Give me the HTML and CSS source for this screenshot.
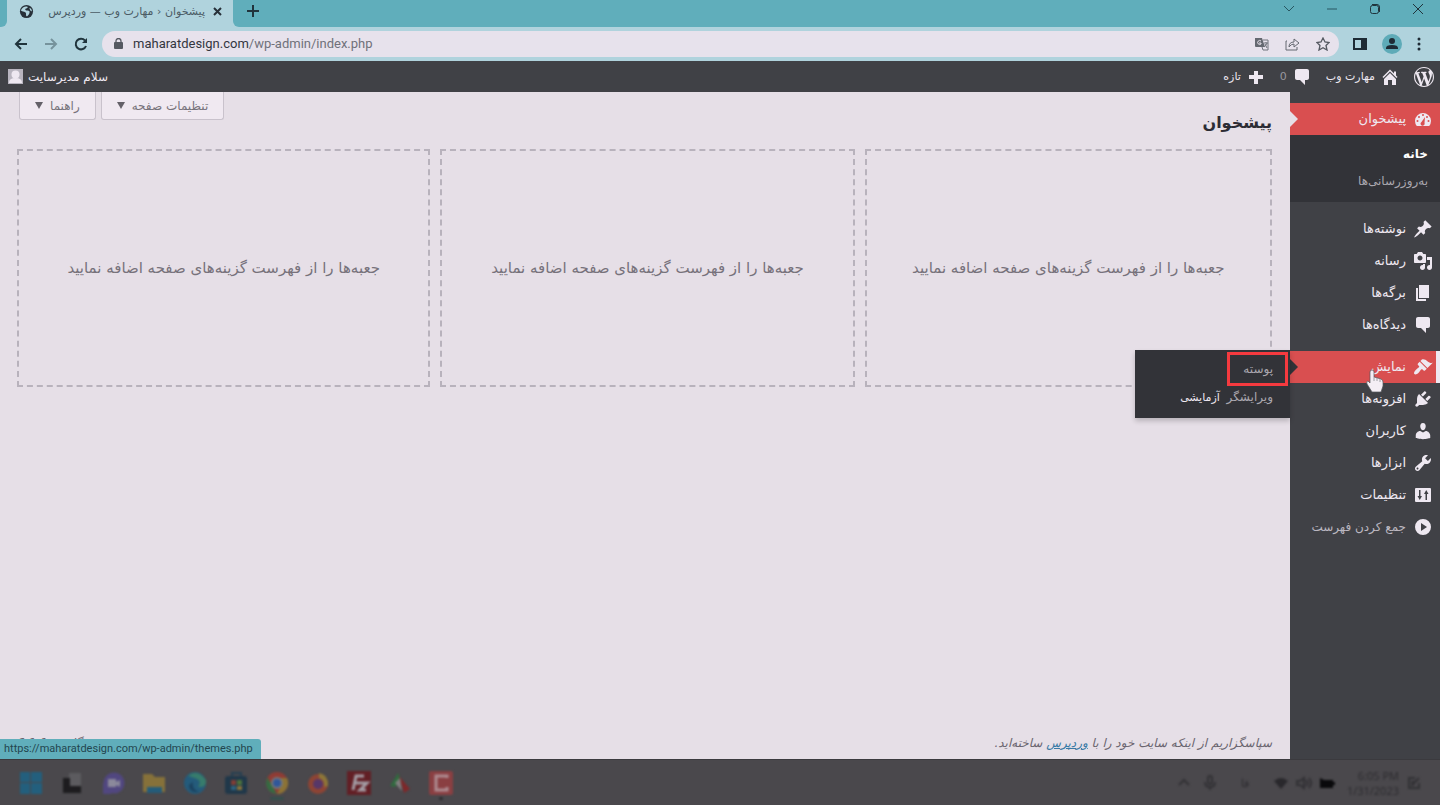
FILE: index.html
```html
<!DOCTYPE html>
<html lang="fa">
<head>
<meta charset="utf-8">
<title>پیشخوان ‹ مهارت وب — وردپرس</title>
<link rel="stylesheet" href="styles.css">
</head>
<body>
<header class="tabstrip">
  <div class="tab">
    <svg class="tab-globe" viewBox="0 0 16 16"><circle cx="8" cy="8" r="7" fill="#273039"/><path d="M3 5c2-2 4-3 6-2 1 1-1 2-2 2-1 1 0 2 2 2 2 0 3 1 2 3s-2 3-3 3c-1-1 0-3-1-4-2-1-4-1-5-2zM11 4l2 1 1 3-2-1z" fill="#b0d3dd"/></svg>
    <span class="tab-title" dir="rtl">پیشخوان ‹ مهارت وب — وردپرس</span>
    <button class="plain" aria-label="Close tab"><svg width="9" height="9" viewBox="0 0 9 9"><path d="M1 1l7 7M8 1L1 8" stroke="#273039" stroke-width="2"/></svg></button>
  </div>
  <div class="strip-rest">
    <button class="plain new-tab" aria-label="New tab"><svg width="12" height="12" viewBox="0 0 12 12"><path d="M6 0v12M0 6h12" stroke="#20343c" stroke-width="2"/></svg></button>
    <div class="window-buttons">
      <button class="plain" aria-label="Search tabs"><svg width="12" height="12" viewBox="0 0 12 12"><path d="M1 3l5 5 5-5"/></svg></button>
      <button class="plain" aria-label="Minimize"><svg width="12" height="12" viewBox="0 0 12 12"><path d="M1 6h10"/></svg></button>
      <button class="plain dark" aria-label="Restore"><svg width="12" height="12" viewBox="0 0 12 12"><rect x="1.500" y="2.500" width="8" height="8" rx="2"/><path d="M3 1.500h5q2.500 0 2.500 2.500v5"/></svg></button>
      <button class="plain dark" aria-label="Close"><svg width="12" height="12" viewBox="0 0 12 12"><path d="M1 1l10 10M11 1L1 11"/></svg></button>
    </div>
  </div>
</header>

<nav class="toolbar" aria-label="Browser">
  <div class="history">
    <button class="plain" aria-label="Back"><svg width="14" height="14" viewBox="0 0 14 14"><path d="M13 7H2M7 2L2 7l5 5"/></svg></button>
    <button class="plain faded" aria-label="Forward"><svg width="14" height="14" viewBox="0 0 14 14"><path d="M1 7h11M7 2l5 5-5 5"/></svg></button>
    <button class="plain" aria-label="Reload"><svg width="14" height="14" viewBox="0 0 14 14"><path d="M12 9A5.300 5.300 0 1 1 11 3.500"/><path d="M13 1v5H8z" fill="#20343c" stroke="none"/></svg></button>
  </div>
  <div class="address">
    <svg width="9" height="12" viewBox="0 0 9 12"><rect y="4" width="9" height="7" rx="1" fill="#555961"/><path d="M2 5V3a2.500 2.500 0 0 1 5 0v2" fill="none" stroke="#555961" stroke-width="1.300"/></svg>
    <a class="url" href="#">maharatdesign.com<span>/wp-admin/index.php</span></a>
    <div class="address-actions">
      <button class="plain" aria-label="Translate"><svg width="14" height="14" viewBox="0 0 14 14"><path d="M0 1h7l3 9H1q-1 0-1-1z" fill="#656971"/><path d="M6 4a2 2 0 1 0 0 3V6H4" fill="none" stroke="#e9e4ed"/><path d="M8 3h5v10H8l-1-3M9 6h4M11 5v1M12 6q-1 3-3 4M10 7l2 4" fill="none" stroke="#70747c"/></svg></button>
      <button class="plain" aria-label="Share"><svg width="15" height="14" viewBox="0 0 15 14" fill="none" stroke="#656971"><path d="M2 4H1v9h11v-3M4 10q0-5 5-5V2l5 4-5 4V7Q6 7 4 10z"/></svg></button>
      <button class="plain" aria-label="Bookmark"><svg width="14" height="14" viewBox="0 0 14 14" fill="none" stroke="#555961" stroke-width="1.300"><path d="M7 1l2 4 4 .5-3 3 1 4.500-4-2.300L3 13l1-4.500-3-3L5 5z"/></svg></button>
    </div>
  </div>
  <div class="browser-actions">
    <button class="plain" aria-label="Side panel"><svg width="14" height="14" viewBox="0 0 14 14"><path d="M1 2h12v10H1z" fill="none" stroke="#1e2b35" stroke-width="2"/><path d="M8 2h5v10H8z" fill="#1e2b35"/></svg></button>
    <button class="plain" aria-label="Profile"><svg width="20" height="20" viewBox="0 0 20 20"><circle cx="10" cy="10" r="10" fill="#5eabb8"/><circle cx="10" cy="7" r="3" fill="#1e2b35"/><path d="M4 15v-1q0-3 6-3t6 3v1z" fill="#1e2b35"/></svg></button>
    <button class="plain" aria-label="Menu"><svg width="4" height="14" viewBox="0 0 4 14" fill="#1e2b35"><circle cx="2" cy="2" r="1.500"/><circle cx="2" cy="7" r="1.500"/><circle cx="2" cy="12" r="1.500"/></svg></button>
  </div>
</nav>

<div class="adminbar" dir="rtl">
  <a href="#" aria-label="WordPress"><svg class="icon" viewBox="0 0 20 20"><path d="M20 10c0-5.510-4.490-10-10-10C4.480 0 0 4.490 0 10c0 5.520 4.480 10 10 10 5.510 0 10-4.480 10-10zM7.780 15.370L4.370 6.220c.55-.02 1.170-.08 1.170-.08.5-.06.44-1.130-.06-1.110 0 0-1.450.11-2.370.11-.18 0-.37 0-.58-.01C4.120 2.690 6.870 1.110 10 1.110c2.330 0 4.450.87 6.050 2.340-.68-.11-1.650.39-1.650 1.580 0 .74.45 1.360.9 2.100.35.61.55 1.360.55 2.460 0 1.490-1.400 5-1.400 5l-3.030-8.370c.54-.02.82-.17.82-.17.5-.05.44-1.250-.06-1.220 0 0-1.440.12-2.380.12-.87 0-2.330-.12-2.330-.12-.5-.03-.56 1.200-.06 1.220l.92.08 1.260 3.410zM17.410 10c.24-.64.74-1.870.43-4.250.7 1.290 1.050 2.710 1.050 4.250 0 3.290-1.730 6.240-4.400 7.780.97-2.590 1.940-5.200 2.920-7.780zM6.100 18.090C3.120 16.650 1.110 13.530 1.110 10c0-1.300.23-2.480.72-3.590C3.250 10.300 4.670 14.200 6.100 18.090zm4.030-6.630l2.580 6.980c-.86.29-1.760.45-2.710.45-.79 0-1.570-.11-2.290-.33.81-2.380 1.620-4.740 2.420-7.100z"/></svg></a>
  <a href="#"><svg class="icon" viewBox="0 0 20 20"><path d="M16 8.500l1.530 1.530-1.060 1.060L10 4.600l-6.470 6.490-1.060-1.060L10 2.500l4 4v-2h2v4zm-6-2.460l6 5.990V18h-4v-5H8v5H4v-5.970z"/></svg>مهارت وب</a>
  <a href="#" class="count"><svg class="icon" viewBox="0 0 20 20"><path d="M15 2H5c-1.100 0-2 .9-2 2v7c0 1.100.9 2 2 2h3l5 5v-5h2c1.100 0 2-.9 2-2V4c0-1.100-.9-2-2-2z"/></svg>0</a>
  <a href="#"><svg class="icon" viewBox="0 0 20 20"><path d="M8 4h4v4h5v4h-5v5H8v-5H3V8h5z"/></svg>تازه</a>
  <a href="#" class="account">سلام مدیرسایت<svg width="15" height="15" viewBox="0 0 15 15"><path d="M0 0h15v15H0z" fill="#b8b4bf"/><circle cx="7.500" cy="5.500" r="4" fill="#eee8f1"/><path d="M1 14q0-5 6.500-5t6.500 5z" fill="#eee8f1"/></svg></a>
</div>

<div class="workspace" dir="rtl">
  <aside class="sidebar">
    <ul class="menu">
      <li class="current"><a href="#"><svg class="icon" viewBox="0 0 20 20"><path fill-rule="evenodd" d="M3.760 17h12.480A8 8 0 1 0 3.760 17zM10 5a1 1 0 1 1 0 2 1 1 0 0 1 0-2zM6 7a1 1 0 1 1 0 2 1 1 0 0 1 0-2zm8 0a1 1 0 1 1 0 2 1 1 0 0 1 0-2zM4.500 11a1 1 0 1 1 0 2 1 1 0 0 1 0-2zm11 0a1 1 0 1 1 0 2 1 1 0 0 1 0-2zM12 8l-.5 6a2 2 0 1 1-3-1z"/></svg>پیشخوان</a>
        <ul class="submenu">
          <li><a href="#" class="selected">خانه</a></li>
          <li><a href="#">به‌روزرسانی‌ها</a></li>
        </ul>
      </li>
      <li><a href="#"><svg class="icon" viewBox="0 0 20 20"><path d="M10.440 3.020l1.820-1.820 6.360 6.350-1.830 1.820c-1.050-.68-2.480-.57-3.410.36l-.75.75c-.92.93-1.040 2.350-.35 3.410l-1.830 1.820-2.410-2.410-2.800 2.790c-.42.42-3.380 2.710-3.800 2.290s1.860-3.390 2.280-3.810l2.790-2.790L4.100 9.360l1.830-1.820c1.050.69 2.480.57 3.400-.36l.75-.75c.93-.92 1.050-2.350.36-3.410z"/></svg>نوشته‌ها</a></li>
      <li><a href="#"><svg class="icon" viewBox="0 0 20 20"><path d="M13 11V4c0-.55-.45-1-1-1h-1.670L9 1H5L3.670 3H2c-.55 0-1 .45-1 1v7c0 .55.45 1 1 1h10c.55 0 1-.45 1-1zM7 4.500c1.380 0 2.500 1.120 2.500 2.500S8.380 9.500 7 9.500 4.500 8.380 4.500 7 5.620 4.500 7 4.500zM14 6h5v10.500c0 1.380-1.120 2.500-2.500 2.500S14 17.880 14 16.500s1.120-2.500 2.500-2.500c.17 0 .34.02.5.05V9h-3V6zm-4 8.050V13h2v3.500c0 1.380-1.120 2.500-2.500 2.500S7 17.880 7 16.500 8.120 14 9.500 14c.17 0 .34.02.5.05z"/></svg>رسانه</a></li>
      <li><a href="#"><svg class="icon" viewBox="0 0 20 20"><path d="M6 15V2h10v13H6zm-1 1h8v2H3V5h2v11z"/></svg>برگه‌ها</a></li>
      <li><a href="#"><svg class="icon" viewBox="0 0 20 20"><path d="M15 2H5c-1.100 0-2 .9-2 2v7c0 1.100.9 2 2 2h3l5 5v-5h2c1.100 0 2-.9 2-2V4c0-1.100-.9-2-2-2z"/></svg>دیدگاه‌ها</a></li>
      <li class="hovered"><a href="#"><svg class="icon" viewBox="0 0 20 20"><path d="M14.480 11.060L7.410 3.990l1.500-1.500c.5-.56 2.300-.47 3.510.32 1.210.8 1.430 1.280 2.910 2.100 1.180.64 2.450 1.260 4.450.85zm-.71.71L6.700 4.700 4.930 6.470c-.39.39-.39 1.020 0 1.410l1.060 1.060c.39.39.39 1.030 0 1.420-.6.6-1.430 1.110-2.210 1.690-.35.26-.7.53-1.010.84C1.430 14.230.4 16.080 1.400 17.070c.99 1 2.840-.03 4.180-1.360.31-.31.58-.66.85-1.020.57-.78 1.080-1.610 1.690-2.210.39-.39 1.020-.39 1.410 0l1.060 1.060c.39.39 1.020.39 1.410 0z"/></svg>نمایش</a>
        <ul class="flyout">
          <li><a href="#">پوسته</a></li>
          <li><a href="#">ویرایشگر <strong>آزمایشی</strong></a></li>
        </ul>
        <svg class="pointer" width="18" height="24" viewBox="0 0 18 24"><path d="M4 3q0-2 2-2t2 2v5l7 2q2 1 2 3v4l-2 6H6l-5-8q-1-3 1-3l2 2z" fill="#f4eef5" stroke="#55585c" stroke-width=".7"/><path d="M8 8v4M11 9v3M14 10v3" stroke="#8a8a90" stroke-width=".8"/></svg>
      </li>
      <li><a href="#"><svg class="icon" viewBox="0 0 20 20"><path d="M13.110 4.360L9.870 7.600 8 5.730l3.240-3.240c.35-.34 1.050-.2 1.560.32.52.51.66 1.210.31 1.550zm-8 1.770l.91-1.120 9.010 9.010-1.190.84c-.71.71-2.630 1.160-3.820 1.160H6.140L4.900 17.260c-.59.59-1.540.59-2.120 0-.59-.58-.59-1.530 0-2.120l1.240-1.240v-3.880c0-1.130.4-3.190 1.090-3.890zm7.260 3.970l3.240-3.240c.34-.35 1.040-.21 1.550.31.52.51.66 1.210.31 1.550l-3.240 3.250z"/></svg>افزونه‌ها</a></li>
      <li><a href="#"><svg class="icon" viewBox="0 0 20 20"><path d="M10 9.250c-2.270 0-2.730-3.440-2.730-3.440C7 4.020 7.820 2 9.970 2c2.160 0 2.980 2.020 2.710 3.810 0 0-.41 3.440-2.680 3.440zm0 2.200L12.720 10c2.390 0 4.520 2.330 4.520 4.530v2.490s-3.650 1.130-7.240 1.130c-3.650 0-7.240-1.130-7.240-1.130v-2.490c0-2.250 1.940-4.480 4.470-4.480z"/></svg>کاربران</a></li>
      <li><a href="#"><svg class="icon" viewBox="0 0 20 20"><path d="M16.680 9.770c-1.340 1.340-3.300 1.670-4.950.99l-5.410 6.520c-.99.99-2.590.99-3.580 0s-.99-2.590 0-3.570l6.520-5.420c-.68-1.650-.35-3.610.99-4.950 1.280-1.280 3.120-1.620 4.720-1.060l-2.890 2.890 2.820 2.820 2.860-2.870c.53 1.580.18 3.390-1.080 4.650zM3.810 16.210c.4.39 1.040.39 1.430 0 .4-.4.4-1.040 0-1.430-.39-.4-1.030-.4-1.430 0-.39.39-.39 1.030 0 1.430z"/></svg>ابزارها</a></li>
      <li><a href="#"><svg class="icon" viewBox="0 0 20 20"><path fill-rule="evenodd" d="M3 3h14q1 0 1 1v12q0 1-1 1H3q-1 0-1-1V4q0-1 1-1zM6 5v6H4.500L6.750 15 9 11H7.500V5zM12.500 15V9H11l2.250-4 2.250 4H14v6z"/></svg>تنظیمات</a></li>
      <li class="collapse"><button><svg class="icon" viewBox="0 0 20 20"><path fill-rule="evenodd" d="M10 2a8 8 0 1 0 0 16 8 8 0 0 0 0-16zM8 6l6 4-6 4z"/></svg>جمع کردن فهرست</button></li>
    </ul>
  </aside>

  <main class="content">
    <div class="content-head">
      <h1>پیشخوان</h1>
      <div class="screen-options">
        <button>تنظیمات صفحه<span class="caret"></span></button>
        <button>راهنما<span class="caret"></span></button>
      </div>
    </div>
    <div class="boxes">
      <section>جعبه‌ها را از فهرست گزینه‌های صفحه اضافه نمایید</section>
      <section>جعبه‌ها را از فهرست گزینه‌های صفحه اضافه نمایید</section>
      <section>جعبه‌ها را از فهرست گزینه‌های صفحه اضافه نمایید</section>
    </div>
    <footer class="credits">
      <p>سپاسگزاریم از اینکه سایت خود را با <a href="#">وردپرس</a> ساخته‌اید.</p>
      <p>نگارش 6.1.1</p>
    </footer>
    <div class="link-status" dir="ltr">https://maharatdesign.com/wp-admin/themes.php</div>
  </main>
</div>

<footer class="taskbar">
  <div class="apps">
    <svg viewBox="0 0 24 24"><path d="M1 1h10v10H1zM12 1h11v10H12zM1 12h10v11H1zM12 12h11v11H12z" fill="#235f7d"/></svg>
    <svg viewBox="0 0 24 24"><path d="M9 2h12v14H9z" fill="#5c5b5f"/><path d="M3 7h7v8h11v7H3z" fill="#1d1c1f"/></svg>
    <svg viewBox="0 0 24 24"><circle cx="13" cy="12" r="10.500" fill="#514780"/><path d="M2 12h8v11H2z" fill="#514780"/><path d="M7 8h8v8H7zM15 11l4-2v7l-4-2z" fill="#8b899b"/></svg>
    <svg viewBox="0 0 24 24"><path d="M1 3h9l3 3h10v15H1z" fill="#86713a"/><path d="M5 16h15v6H5z" fill="#245c7a"/></svg>
    <svg viewBox="0 0 24 24"><circle cx="12" cy="12" r="11" fill="#245b7b"/><path d="M5 5q9-8 18 4 1 8-8 7 4-6-1-8-5-2-9-3z" fill="#377c6c"/><path d="M10 11q-2 7 6 10-10 1-10-7z" fill="#1c425f"/></svg>
    <svg viewBox="0 0 24 24"><path d="M8 5V2h9v3" fill="none" stroke="#243f53" stroke-width="2"/><rect x="1" y="5" width="22" height="18" rx="3" fill="#20384a"/><path d="M7 9h5v5H7z" fill="#803d35"/><path d="M13 9h5v5h-5z" fill="#4c713c"/><path d="M7 15h5v4H7z" fill="#2d627e"/><path d="M13 15h5v4h-5z" fill="#8a743a"/></svg>
    <span class="app-running"><svg viewBox="0 0 24 24"><circle cx="12" cy="12" r="11" fill="#903c35"/><path d="M2.500 6.500L12 23A11 11 0 0 1 2.500 6.500z" fill="#356b42"/><path d="M12 7h10a11 11 0 0 1-10 16l4-8z" fill="#8c7335"/><circle cx="12" cy="12" r="5" fill="#30579a" stroke="#77777a" stroke-width="2"/></svg></span>
    <svg viewBox="0 0 24 24"><circle cx="12" cy="13" r="10" fill="#8e4434"/><circle cx="12" cy="13" r="5" fill="#573768"/><path d="M13 2q10 2 9 13l-4 1q1-7-5-9z" fill="#8e7638"/></svg>
    <svg viewBox="0 0 24 24"><path d="M0 0h24v24H0z" fill="#621f25"/><path d="M6 19L9 5h8M7 12h8M13 12h7l-7 7h6" fill="none" stroke="#a49da5" stroke-width="3"/></svg>
    <svg viewBox="0 0 24 24"><path d="M2 15L10 2l3 7-6 7z" fill="#316b3f"/><path d="M11 5l11 13-6 4z" fill="#7e282a"/><path d="M7 12l5-5 2 13z" fill="#817f80"/></svg>
    <span class="app-running small"><svg viewBox="0 0 24 24"><rect width="24" height="24" rx="2" fill="#8a3f42"/><path d="M18 7V5H7v14h11v-3" fill="none" stroke="#ae8c91" stroke-width="3"/></svg></span>
  </div>
  <div class="tray">
    <svg width="14" height="14" viewBox="0 0 14 14"><path d="M2 9l5-5 5 5"/></svg>
    <svg width="14" height="16" viewBox="0 0 14 16"><rect x="5" y="1" width="4" height="8" rx="2"/><path d="M2 7q0 5 5 5t5-5M7 12v3"/></svg>
    <span class="keyboard" lang="fa">فا</span>
    <div class="tray-status">
      <svg width="16" height="14" viewBox="0 0 16 14"><path d="M1 5q7-6 14 0l-7 8z" fill="#29282c" stroke="none"/></svg>
      <svg width="16" height="14" viewBox="0 0 16 14"><path d="M1 5h3l4-3v10L4 9H1zM10 4q3 3 0 6M13 2q4 5 0 10"/></svg>
      <svg width="16" height="14" viewBox="0 0 16 14"><path d="M1 2l4 2h9v2h2v3h-2v3H1z" fill="#09090b" stroke="none"/></svg>
    </div>
    <div class="clock-group">
      <div class="clock">6:05 PM<br>1/31/2023</div>
      <svg width="14" height="14" viewBox="0 0 14 14"><path d="M8 2H2v10h10V7M5 9l7-7M4 6h4M4 9h3"/></svg>
    </div>
  </div>
</footer>
</body>
</html>
```
FILE: styles.css
```css
* { box-sizing: border-box; }
body {
  margin: 0;
  min-height: 100vh;
  display: flex;
  flex-direction: column;
  font: 12px/18px "DejaVu Sans", Tahoma, sans-serif;
  color: #2c2c34;
  background: #e6dfe7;
}
svg { display: block; flex: none; }
ul { list-style: none; margin: 0; padding: 0; }
a { text-decoration: none; color: inherit; }
button { font: inherit; color: inherit; cursor: pointer; }
.plain { border: 0; background: none; padding: 0; }
.icon { width: 20px; height: 20px; fill: #eee8f1; }

/* Browser window */
.tabstrip {
  height: 27px;
  display: flex;
  background: #b0d3dd;
}
.tabstrip::before {
  content: "";
  width: 7px;
  background: #60aebb;
  border-radius: 0 0 6px 0;
}
.tab {
  width: 226px;
  padding: 0 11px 4px 12px;
  display: flex;
  align-items: center;
}
.tab-globe { width: 15px; height: 15px; }
.tab-title { flex: 1; margin-right: 8px; font-size: 11px; color: #4b5b65; white-space: nowrap; }
.strip-rest {
  flex: 1;
  padding: 0 16px 5px 14px;
  display: flex;
  align-items: center;
  justify-content: space-between;
  background: #60aebb;
  border-radius: 0 0 0 6px;
}
.window-buttons { display: flex; gap: 31px; padding-bottom: 4px; }
.window-buttons svg { fill: none; stroke: #285762; }
.window-buttons .dark svg { stroke: #20343c; }
.toolbar {
  height: 34px;
  padding: 0 19px 0 14px;
  display: flex;
  align-items: center;
  gap: 14px;
  background: #b0d3dd;
}
.history { display: flex; gap: 16px; }
.history svg { fill: none; stroke: #20343c; stroke-width: 2; }
.faded { opacity: .4; }
.address {
  flex: 1;
  height: 26px;
  padding: 0 9px 0 12px;
  display: flex;
  align-items: center;
  gap: 10px;
  border-radius: 13px;
  background: #e7e2ec;
}
.url { flex: 1; font: 13px/18px Roboto, sans-serif; color: #33363e; }
.url span { color: #70717a; }
.address-actions { display: flex; gap: 16px; }
.browser-actions { display: flex; align-items: center; gap: 15px; }

/* Site toolbar */
.adminbar {
  height: 31px;
  padding: 0 6px 0 8px;
  display: flex;
  align-items: center;
  gap: 14px;
  font-size: 11px;
  color: #eee8f1;
  background: #404146;
}
.adminbar a { display: flex; align-items: center; gap: 5px; }
.adminbar .count { color: #99979f; }
.adminbar .account { margin-right: auto; font-size: 12px; }

/* Admin menu */
.workspace { flex: 1; display: flex; }
.sidebar { width: 150px; flex: none; padding-top: 11px; background: #404146; color: #eee8f1; }
.menu > li { position: relative; }
.menu > li > a, .collapse button {
  min-height: 32px;
  width: 100%;
  padding: 0 7px;
  display: flex;
  align-items: center;
  gap: 7px;
  font-size: 13px;
}
.collapse button { border: 0; background: none; color: #bbb7c0; font-size: 12px; }
.current > a, .hovered > a { background: #d94f50; }
.current > a::after, .hovered::after {
  content: "";
  position: absolute;
  left: 0;
  top: 8px;
  border: 8px solid transparent;
  border-left-color: #e6dfe7;
  border-right-width: 0;
}
.submenu { margin-bottom: 11px; padding: 6px 0 7px; background: #323338; }
.submenu a { display: block; padding: 4px 12px 5px; color: #aaa7af; }
.submenu .selected { color: #fff; font-weight: bold; }
.hovered { margin-top: 10px; }
.hovered > a { box-shadow: inset -4px 0 #eee8f1; }
.hovered::after { border-left-color: #323338; }
.flyout {
  position: absolute;
  right: 100%;
  top: -1px;
  width: 155px;
  padding: 2px 2px 6px;
  background: #323338;
  box-shadow: 0 3px 5px #0003;
  z-index: 2;
}
.flyout a { display: block; color: #aaa7af; }
.flyout li:first-child a { width: 61px; padding: 5px 12px; border: 3px solid #f53a3f; }
.flyout li:last-child a { padding: 2px 15px 5px; }
.flyout strong { margin-right: 3px; font-size: 11px; font-weight: normal; color: #eee8f1; }
.pointer { position: absolute; top: 18px; left: 76px; z-index: 3; }

/* Dashboard */
.content {
  position: relative;
  flex: 1;
  min-width: 0;
  padding: 0 18px 7px 17px;
  display: flex;
  flex-direction: column;
}
.content-head { height: 57px; display: flex; justify-content: space-between; align-items: flex-start; }
h1 { margin: 18px 0 0; font-size: 16px; line-height: 25px; }
.screen-options { display: flex; gap: 5px; padding-left: 2px; }
.screen-options button {
  height: 28px;
  padding: 0 15px;
  display: flex;
  align-items: center;
  gap: 7px;
  color: #77737b;
  background: #f0e9f1;
  border: 1px solid #c9c2cc;
  border-top: 0;
  border-radius: 0 0 3px 3px;
}
.caret { border: 4px solid transparent; border-top: 7px solid #646169; border-bottom: 0; }
.boxes { display: grid; grid-template-columns: 407fr 414fr 413fr; gap: 10px; }
.boxes section {
  height: 238px;
  display: grid;
  place-items: center;
  border: 2px dashed #b8b2bc;
  font-size: 15px;
  color: #77727b;
}
.credits { margin-top: auto; display: flex; justify-content: space-between; font-style: italic; color: #6a656f; }
.credits p { margin: 0; }
.credits a { color: #397aa5; text-decoration: underline; }
.link-status {
  position: absolute;
  left: 0;
  bottom: 0;
  padding: 1px 8px 1px 4px;
  border-radius: 0 3px 0 0;
  font: 11px/18px Roboto, sans-serif;
  color: #23464f;
  background: #60aebb;
}

/* Taskbar */
.taskbar {
  height: 46px;
  padding: 0 19px;
  display: flex;
  justify-content: space-between;
  align-items: center;
  background: #4a484c;
  border-top: 1px solid #3b3a3e;
}
.apps { display: flex; gap: 17px; filter: blur(1px); }
.apps svg { width: 24px; height: 24px; }
.app-running { position: relative; }
.app-running::after { content: ""; position: absolute; left: 5px; right: 5px; bottom: -5px; height: 3px; border-radius: 2px; background: #344f4c; }
.small::after { left: 10px; right: 10px; background: #2d2c30; }
.tray { display: flex; align-items: center; gap: 12px; font: 11px/15px "Open Sans", sans-serif; color: #2b2a2e; filter: blur(1px); }
.tray svg { fill: none; stroke: #323135; stroke-width: 2; }
.keyboard { padding: 0 12px; }
.tray-status { display: flex; gap: 7px; }
.clock-group { display: flex; align-items: center; gap: 8px; }
.clock { text-align: right; }
```
